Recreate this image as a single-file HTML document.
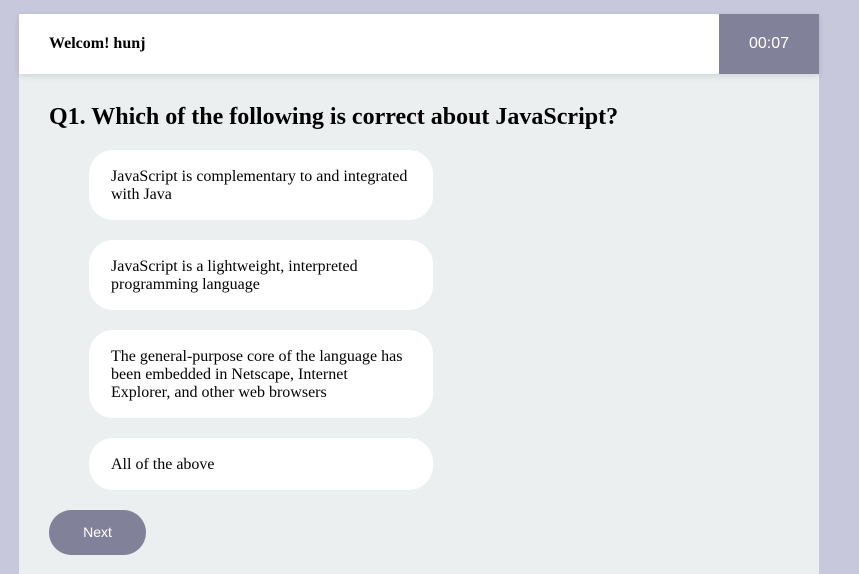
<!DOCTYPE html>
<html><head><meta charset="utf-8"><style>
body{margin:0;width:859px;height:569px;background:#c8c8dc;font-family:"Liberation Serif",serif;overflow:hidden;position:relative}
.card{position:absolute;left:19px;top:14px;width:800px;height:560px;background:#ebeff0}
.hdr{position:absolute;left:0;top:0;width:800px;height:60px;background:#fff;box-shadow:0 2px 6px rgba(0,0,0,.12)}
.hdr .w{position:absolute;left:30px;top:21px;font-weight:bold;font-size:16px}
.tm{position:absolute;right:0;top:0;width:100px;height:60px;background:#818199;color:#fff;font-family:"Liberation Sans",sans-serif;font-size:16px;text-align:center;line-height:60px}
h1{position:absolute;left:30px;top:90px;margin:0;font-size:24px;font-weight:bold}
.o{position:absolute;left:70px;width:300px;background:#fff;border-radius:24px;padding:0 22px;font-size:16px;line-height:18px;box-sizing:content-box}
.nx{position:absolute;left:30px;top:496px;width:97px;height:45px;border-radius:23px;background:#818199;color:#fff;font-family:"Liberation Sans",sans-serif;font-size:14px;text-align:center;line-height:45px}
</style></head><body>
<div class="card">
<div class="hdr"><div class="w">Welcom! hunj</div><div class="tm">00:07</div></div>
<h1>Q1. Which of the following is correct about JavaScript?</h1>
<div class="o" style="top:136px;height:70px"><div style="padding-top:18px">JavaScript is complementary to and integrated with Java</div></div>
<div class="o" style="top:226px;height:70px"><div style="padding-top:18px">JavaScript is a lightweight, interpreted programming language</div></div>
<div class="o" style="top:316px;height:88px"><div style="padding-top:18px">The general-purpose core of the language has been embedded in Netscape, Internet Explorer, and other web browsers</div></div>
<div class="o" style="top:424px;height:52px"><div style="padding-top:18px">All of the above</div></div>
<div class="nx">Next</div>
</div>
</body></html>
